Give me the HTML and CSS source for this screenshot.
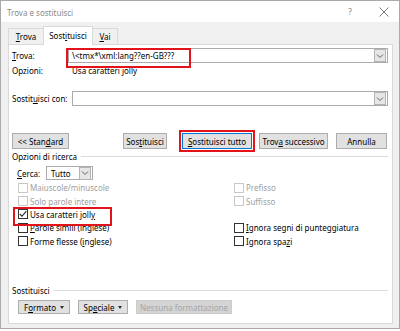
FILE: index.html
```html
<!DOCTYPE html>
<html lang="it">
<head>
    <meta charset="UTF-8">
    <title>Trova e sostituisci</title>
    <link rel="stylesheet" href="styles.css">
</head>
<body>
    <!-- Dialog window -->
    <div class="window">
        <div class="titlebar">
            <span class="title">Trova e sostituisci</span>
            <span class="help">?</span>
            <span class="close">
                <svg width="10" height="10" viewBox="0 0 10 10"><path d="M0.5 0.5 L9.5 9.5 M9.5 0.5 L0.5 9.5" stroke="#7a7a7a" stroke-width="1" fill="none"/></svg>
            </span>
        </div>

        <div class="client">
            <div class="tabs">
                <div class="tab tab-trova"><span><u>T</u>rova</span></div>
                <div class="tab tab-active"><span>Sost<u>i</u>tuisci</span></div>
                <div class="tab tab-vai"><span><u>V</u>ai</span></div>
            </div>

            <div class="panel">
                <!-- Find / replace fields -->
                <div class="field-row">
                    <span class="field-label label-find"><u>T</u>rova:</span>
                    <div class="combo marked mark-find">
                        <span class="combo-text">\&lt;tmx*\xml:lang??en-GB???</span>
                        <span class="combo-btn"><svg width="8" height="6" viewBox="0 0 8 6"><path d="M1 1.5 L4 4.5 L7 1.5" stroke="#606060" fill="none"/></svg></span>
                    </div>
                </div>
                <div class="info-row">
                    <span class="field-label label-wide">Opzioni:</span>
                    <span>Usa caratteri jolly</span>
                </div>
                <div class="field-row replace-row">
                    <span class="field-label label-replace">Sostit<u>u</u>isci con:</span>
                    <div class="combo">
                        <span class="combo-text"></span>
                        <span class="combo-btn"><svg width="8" height="6" viewBox="0 0 8 6"><path d="M1 1.5 L4 4.5 L7 1.5" stroke="#606060" fill="none"/></svg></span>
                    </div>
                </div>

                <!-- Action buttons -->
                <div class="button-row">
                    <span class="btn btn-standard"><span>&lt;&lt; Stan<u>d</u>ard</span></span>
                    <span class="btn btn-replace"><span>Sos<u>t</u>ituisci</span></span>
                    <span class="btn btn-default btn-all marked mark-all"><span><u>S</u>ostituisci tutto</span></span>
                    <span class="btn btn-next"><span>Trov<u>a</u> successivo</span></span>
                    <span class="btn btn-cancel"><span>Annulla</span></span>
                </div>

                <!-- Search options -->
                <div class="group-heading heading-options">Opzioni di ricerca</div>
                <div class="search-row">
                    <span class="search-label"><u>C</u>erca:</span>
                    <div class="combo select">
                        <span class="combo-text">Tutto</span>
                        <span class="combo-btn"><svg width="8" height="6" viewBox="0 0 8 6"><path d="M1 1.5 L4 4.5 L7 1.5" stroke="#606060" fill="none"/></svg></span>
                    </div>
                </div>
                <div class="options">
                    <label class="check disabled"><span class="box"></span><span>Maiuscole/minuscole</span></label>
                    <label class="check disabled"><span class="box"></span><span>Prefisso</span></label>
                    <label class="check disabled"><span class="box"></span><span>Solo parole intere</span></label>
                    <label class="check disabled"><span class="box"></span><span>Suffisso</span></label>
                    <label class="check marked mark-jolly"><span class="box"><svg width="8" height="8" viewBox="0 0 8 8"><path d="M0.8 4 L3 6.3 L7.3 1.2" stroke="#222" stroke-width="1.1" fill="none"/></svg></span><span>Usa caratteri joll<u>y</u></span></label>
                    <span></span>
                    <label class="check"><span class="box"></span><span><u>P</u>arole simili (inglese)</span></label>
                    <label class="check"><span class="box"></span><span><u>I</u>gnora segni di punteggiatura</span></label>
                    <label class="check"><span class="box"></span><span>Forme flesse (<u>i</u>nglese)</span></label>
                    <label class="check"><span class="box"></span><span>Ignora spa<u>z</u>i</span></label>
                </div>

                <!-- Replace formatting -->
                <div class="bottom-group">
                    <div class="group-heading heading-replace">Sostituisci</div>
                    <div class="format-row">
                        <span class="btn btn-menu btn-format"><span>F<u>o</u>rmato</span><span class="caret"></span></span>
                        <span class="btn btn-menu btn-special"><span>Sp<u>e</u>ciale</span><span class="caret"></span></span>
                        <span class="btn btn-disabled btn-none"><span>Nessuna formattazione</span></span>
                    </div>
                </div>
            </div>
        </div>
    </div>
</body>
</html>
```

FILE: styles.css
```css
/* Word style find & replace dialog */
* {
    box-sizing: border-box;
}
body {
    margin: 0;
    font-family: "Noto Sans", "Segoe UI", sans-serif;
    font-size: 8px;
    color: #000000;
    background: #ffffff;
}
u {
    text-decoration-thickness: 1px;
    text-underline-offset: 1px;
}
.window {
    width: 400px;
    height: 329px;
    border: 1px solid #a9a9a9;
    background: #f0f0f0;
    display: flex;
    flex-direction: column;
    overflow: hidden;
}

/* Title bar */
.titlebar {
    height: 21px;
    flex: none;
    background: #ffffff;
    display: flex;
    align-items: center;
    padding-left: 6px;
    color: #8a8a8a;
}
.title {
    padding-top: 1px;
}
.help {
    margin-left: auto;
    width: 10px;
    font-size: 9px;
    color: #8a8a8a;
}
.close {
    width: 10px;
    height: 10px;
    margin: 0 10px 0 21px;
    display: flex;
}

/* Tabs */
.client {
    flex: 1;
    padding: 4px 6px 0 7px;
    display: flex;
    flex-direction: column;
}
.tabs {
    height: 18px;
    display: flex;
    align-items: flex-end;
}
.tab {
    height: 16px;
    border: 1px solid #dadada;
    border-bottom: none;
    display: flex;
    align-items: center;
    justify-content: center;
}
.tab-trova {
    width: 35px;
    border-right: none;
}
.tab-vai {
    width: 25px;
    border-left: none;
}
.tab-active {
    width: 50px;
    height: 19px;
    margin-bottom: -1px;
    background: #ffffff;
    position: relative;
    z-index: 1;
    padding-bottom: 2px;
}

/* Panel */
.panel {
    height: 280px;
    background: #ffffff;
    border: 1px solid #d9d9d9;
    padding: 3px 4px 9px 3px;
    display: flex;
    flex-direction: column;
}
.field-row {
    height: 15px;
    display: flex;
    align-items: center;
}
.field-label {
    flex: none;
}
.label-find {
    width: 56px;
}
.label-wide,
.label-replace {
    width: 60px;
}
.info-row {
    height: 13px;
    margin-top: 1px;
    display: flex;
    align-items: center;
}
.replace-row {
    margin-top: 14px;
}
.combo {
    flex: 1;
    height: 15px;
    border: 1px solid #ababab;
    background: #ffffff;
    display: flex;
    align-items: center;
    padding: 0 1px 0 3px;
}
.combo-text {
    flex: 1;
}
.combo-btn {
    width: 12px;
    height: 13px;
    background: #e6e6e6;
    border: 1px solid #b4b4b4;
    display: flex;
    align-items: center;
    justify-content: center;
}

/* Buttons */
.button-row {
    height: 16px;
    margin-top: 27px;
    display: flex;
}
.btn {
    height: 100%;
    background: #e1e1e1;
    border: 1px solid #adadad;
    display: flex;
    align-items: center;
    justify-content: center;
    white-space: nowrap;
}
.btn-standard {
    width: 57px;
}
.btn-replace {
    width: 44px;
    margin-left: 54px;
}
.btn-all {
    width: 70px;
    margin-left: 15px;
}
.btn-default {
    border-color: #0078d7;
}
.btn-next {
    width: 69px;
    margin-left: 7px;
}
.btn-cancel {
    width: 51px;
    margin-left: 8px;
}

/* Red annotation boxes */
.marked {
    position: relative;
}
.marked::after {
    content: "";
    position: absolute;
    border: 2px solid #e3131b;
    pointer-events: none;
}
.mark-find::after {
    left: -3px;
    top: -1px;
    width: 121px;
    height: 16px;
}
.mark-all::after {
    left: -4px;
    top: -4px;
    right: -4px;
    bottom: -4px;
}
.mark-jolly::after {
    left: -5px;
    top: -1px;
    width: 95px;
    height: 15px;
}

/* Group headings */
.group-heading {
    height: 13px;
    display: flex;
    align-items: center;
}
.group-heading::after {
    content: "";
    flex: 1;
    height: 1px;
    background: #dcdcdc;
    margin-left: 4px;
}
.heading-options {
    margin-top: 1px;
}

/* Search options */
.search-row {
    height: 14px;
    margin-top: 3px;
    padding-left: 5px;
    display: flex;
    align-items: center;
}
.search-label {
    width: 29px;
}
.select {
    flex: none;
    width: 47px;
    height: 14px;
}
.select .combo-text {
    padding-left: 1px;
}
.options {
    margin-top: 1px;
    padding-left: 6px;
    display: grid;
    grid-template-columns: 216px 1fr;
    grid-auto-rows: 13.4px;
}
.check {
    display: flex;
    align-items: center;
}
.box {
    width: 10px;
    height: 10px;
    border: 1px solid #333333;
    background: #ffffff;
    margin-right: 2px;
    display: flex;
    align-items: center;
    justify-content: center;
}
.check.disabled {
    color: #a0a0a0;
}
.check.disabled .box {
    border-color: #c8c8c8;
}

/* Bottom group */
.bottom-group {
    margin-top: auto;
}
.format-row {
    height: 14px;
    margin-top: 3px;
    padding-left: 6px;
    display: flex;
    gap: 8px;
}
.btn-format {
    width: 52px;
}
.btn-special {
    width: 50px;
}
.btn-none {
    width: 96px;
}
.caret {
    width: 0;
    height: 0;
    margin-left: 4px;
    border-left: 2.5px solid transparent;
    border-right: 2.5px solid transparent;
    border-top: 3px solid #333;
}
.btn-disabled {
    background: #d4d4d4;
    border-color: #cccccc;
    color: #a6a6a6;
}
```
